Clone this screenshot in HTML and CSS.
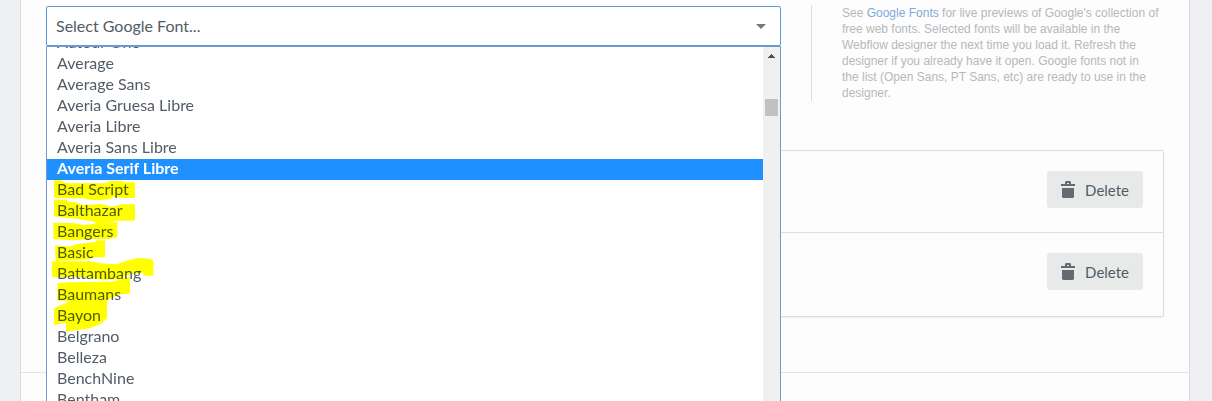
FILE: index.html
```html
<!DOCTYPE html>
<html lang="en">
<head>
    <meta charset="UTF-8">
    <meta name="viewport" content="width=device-width, initial-scale=1.0">
    <title>Fonts</title>
    <link rel="stylesheet" href="styles.css">
</head>
<body>
    <main class="panel">
        <section class="fonts">
            <div class="fonts-add">
                <div class="font-picker">
                    <select class="font-select" aria-label="Google font">
                        <option>Select Google Font...</option>
                    </select>
                    <svg class="font-arrow" viewBox="0 0 10 5" aria-hidden="true">
                        <path d="M0 0h10L5 5z"/>
                    </svg>
                    <div class="font-popup">
                        <ul class="font-list" role="listbox" aria-label="Google fonts">
                            <li class="font-option" role="option">Autour One</li>
                            <li class="font-option" role="option">Average</li>
                            <li class="font-option" role="option">Average Sans</li>
                            <li class="font-option" role="option">Averia Gruesa Libre</li>
                            <li class="font-option" role="option">Averia Libre</li>
                            <li class="font-option" role="option">Averia Sans Libre</li>
                            <li class="font-option active" role="option" aria-selected="true">Averia Serif Libre</li>
                            <li class="font-option" role="option">Bad Script</li>
                            <li class="font-option" role="option">Balthazar</li>
                            <li class="font-option" role="option">Bangers</li>
                            <li class="font-option" role="option">Basic</li>
                            <li class="font-option" role="option">Battambang</li>
                            <li class="font-option" role="option">Baumans</li>
                            <li class="font-option" role="option">Bayon</li>
                            <li class="font-option" role="option">Belgrano</li>
                            <li class="font-option" role="option">Belleza</li>
                            <li class="font-option" role="option">BenchNine</li>
                            <li class="font-option" role="option">Bentham</li>
                        </ul>
                        <div class="scrollbar" aria-hidden="true">
                            <svg class="scrollbar-up" viewBox="0 0 7 4">
                                <path d="M3 0h1v1h1v1h1v1h1v1H0V3h1V2h1V1h1z"/>
                            </svg>
                            <div class="scrollbar-thumb"></div>
                        </div>
                        <!-- marker strokes over the list -->
                        <svg class="marker" viewBox="21 90 330 462" aria-hidden="true">
                            <path d="M42 91H62L72 97 85 100H195L210 93H248L250 97H285V144H250L222 140 208 148 165 151 130 145H55L42 140z"/>
                            <path d="M42 149H80L82 155 105 157 130 165 180 162 215 170 248 163H285V212H230L215 216H170L120 208 60 202 42 199z"/>
                            <path d="M40 219H100L130 225 165 221 170 215 200 217H232V260L210 267H145L100 271 40 267z"/>
                            <path d="M45 286 88 290 110 282 165 277 170 271H195V322H165L145 328 47 333z"/>
                            <path d="M36 334H150L180 340 230 343 260 332 290 324 330 326 340 332V377H310V368L270 372 235 388 190 389 130 381H36z"/>
                            <path d="M52 400 90 397 218 395 250 384 270 382V431L240 433 201 450V505L185 520 150 535 110 540 78 545V518L42 525V478L55 468 78 460 90 453 52 452z"/>
                        </svg>
                    </div>
                </div>
                <p class="help">See <a class="help-link" href="#">Google Fonts</a> for live previews of Google's collection of free web fonts. Selected fonts will be available in the Webflow designer the next time you load it. Refresh the designer if you already have it open. Google fonts not in<br>the list (Open Sans, PT Sans, etc) are ready to use in the designer.</p>
            </div>
            <ul class="installed">
                <li class="installed-row">
                    <button class="delete-btn" type="button">
                        <svg class="trash" viewBox="0 0 14 17" aria-hidden="true">
                            <path fill-rule="evenodd" d="M0 3h4V1l1-1h4l1 1v2h4v2H0zM6 2v1h2V2zM1 7h12v9l-1 1H2l-1-1z"/>
                        </svg>
                        Delete
                    </button>
                </li>
                <li class="installed-row">
                    <button class="delete-btn" type="button">
                        <svg class="trash" viewBox="0 0 14 17" aria-hidden="true">
                            <path fill-rule="evenodd" d="M0 3h4V1l1-1h4l1 1v2h4v2H0zM6 2v1h2V2zM1 7h12v9l-1 1H2l-1-1z"/>
                        </svg>
                        Delete
                    </button>
                </li>
            </ul>
        </section>
    </main>
</body>
</html>
```
FILE: styles.css
```css
* {
    box-sizing: border-box;
    margin: 0;
    padding: 0;
}

body {
    height: 100vh;
    padding: 0 22px 0 20px;
    overflow: hidden;
    background: #eff0f3;
    color: #525c66;
    font-family: Lato, sans-serif;
    font-size: 16px;
}

.panel {
    min-height: 100vh;
    background: #fdfdfd;
    border: solid #dcdddf;
    border-width: 0 1px;
}

.fonts {
    padding: 5px 25px 55px;
    border-bottom: 1px solid #e2e3e3;
}

.fonts-add {
    display: grid;
    grid-template-columns: 1fr 353px;
    gap: 30px;
    margin-bottom: 49px;
}

.font-picker {
    position: relative;
    align-self: start;
    margin-top: 1px;
}

.font-select {
    display: block;
    width: 100%;
    height: 40px;
    padding: 0 9px 2px;
    appearance: none;
    background: #fff;
    border: 1px solid #5e9ad9;
    border-radius: 2px;
    color: inherit;
    font: inherit;
}

.font-arrow {
    position: absolute;
    top: 18px;
    right: 15px;
    width: 10px;
    height: 5px;
    fill: #777;
}

.font-popup {
    position: absolute;
    top: 100%;
    left: 0;
    right: 0;
    z-index: 1;
    display: flex;
    overflow: hidden;
    background: #fff;
    border: 1px solid #7299d0;
}

.font-list {
    flex: 1;
    margin-top: -14px;
    list-style: none;
}

.font-option {
    padding: 0 10px 3px;
    line-height: 18px;
}

.font-option.active {
    background: #1e90ff;
    color: #fff;
    font-weight: bold;
}

.scrollbar {
    width: 17px;
    padding: 7px 2px;
    background: #f0f0f0;
}

.scrollbar-up {
    display: block;
    width: 7px;
    height: 4px;
    margin: 0 auto 41px;
    fill: #505050;
}

.scrollbar-thumb {
    height: 17px;
    background: #c1c1c1;
}

.marker {
    position: absolute;
    top: 133px;
    left: 0;
    width: 110px;
    height: 154px;
    fill: #ff0;
    mix-blend-mode: multiply;
    pointer-events: none;
}

.help {
    padding-left: 30px;
    border-left: 1px solid #dcdddd;
    color: #b6b8bb;
    font-family: "Liberation Sans", Arial, sans-serif;
    font-size: 12px;
    line-height: 16px;
}

.help-link {
    color: #7ea9dc;
    text-decoration: none;
}

.installed {
    padding-bottom: 2px;
    border: 1px solid #dcdddd;
    border-radius: 2px;
    box-shadow: 0 1px 2px rgba(0, 0, 0, 0.06);
    list-style: none;
}

.installed-row {
    display: flex;
    justify-content: flex-end;
    padding: 20px 20px 24px;
}

.installed-row + .installed-row {
    border-top: 1px solid #dcdddd;
}

.delete-btn {
    display: flex;
    align-items: center;
    gap: 10px;
    height: 37px;
    padding: 0 14px;
    background: #e8eae9;
    border: none;
    border-radius: 3px;
    color: inherit;
    font: inherit;
    font-size: 15px;
}

.trash {
    width: 14px;
    height: 17px;
    fill: #636a70;
}
```
